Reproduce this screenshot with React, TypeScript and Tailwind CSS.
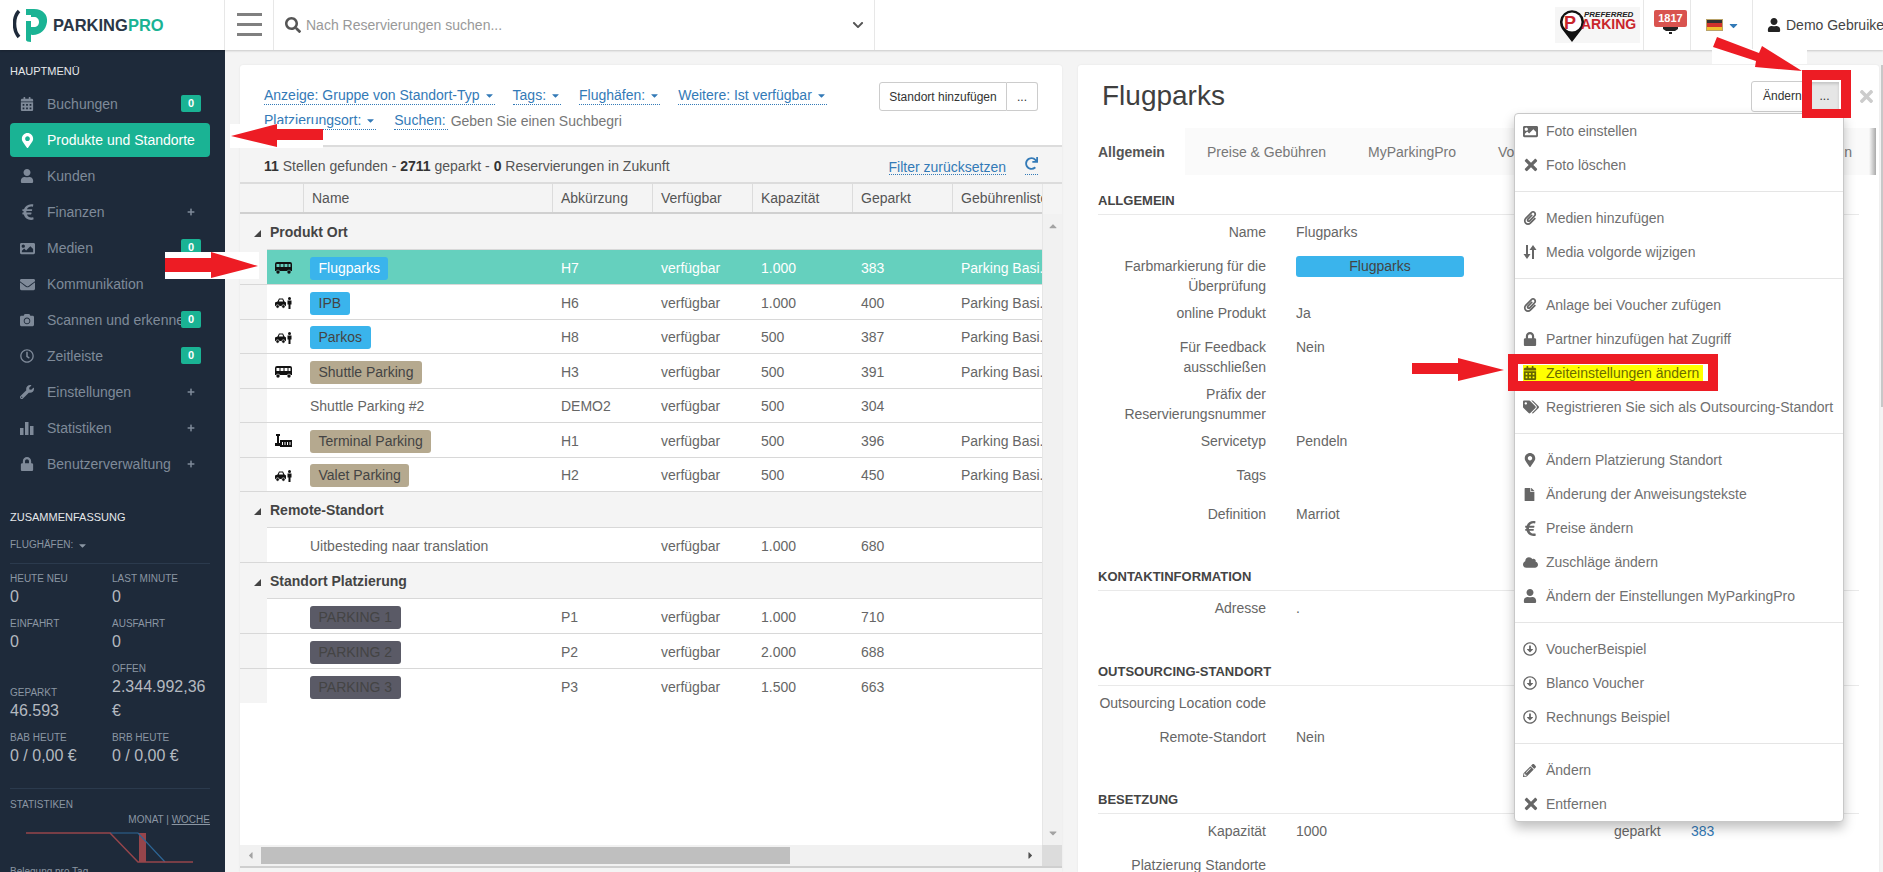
import React from "react";
import {
  FaCalendarAlt, FaMapMarkerAlt, FaUser, FaEuroSign, FaImage, FaEnvelope, FaCamera, FaRegClock,
  FaWrench, FaLock, FaPlus, FaTimes, FaPaperclip, FaFile, FaCloud, FaTags, FaPencilAlt, FaSearch,
  FaCaretDown, FaCaretUp, FaCaretLeft, FaCaretRight, FaChevronDown, FaRedo, FaRegArrowAltCircleDown,
} from "react-icons/fa";

const BusIcon = ({ color = "#111" }: { color?: string }) => (
  <svg width="17" height="12" viewBox="0 0 17 12">
    <path fill={color} fillRule="evenodd" d="M2 0h13a2 2 0 0 1 2 2v7h-1.2a2 2 0 0 0-3.6 0H4.8a2 2 0 0 0-3.6 0H0V2a2 2 0 0 1 2-2zM1.5 2v3h3V2zM5.5 2v3h3V2zM9.5 2v3h3V2zM13.5 2v3h2V2z" />
    <circle cx="3" cy="10" r="1.7" fill={color} />
    <circle cx="14" cy="10" r="1.7" fill={color} />
  </svg>
);

const ValetIcon = () => (
  <svg width="17" height="12" viewBox="0 0 17 12">
    <path fill="#111" fillRule="evenodd" d="M2.5 4.5L4 1.5h4l1.5 3L11 5.5V9H0V5.5zM4.6 2.5L3.8 4.5h4.4L7.4 2.5z" />
    <circle cx="2.6" cy="9.5" r="1.7" fill="#111" stroke="#fff" strokeWidth=".6" />
    <circle cx="8.4" cy="9.5" r="1.7" fill="#111" stroke="#fff" strokeWidth=".6" />
    <circle cx="14.5" cy="1.5" r="1.5" fill="#111" />
    <path fill="#111" d="M12.5 3.5h4v4h-1v4.5h-2V7.5h-1z" />
  </svg>
);

const TerminalIcon = () => (
  <svg width="17" height="14" viewBox="0 0 17 14">
    <path fill="#111" d="M1 0h4v2H4v7h1v3H0V9h2V2H1z" />
    <path fill="#111" fillRule="evenodd" d="M5 6h12v7H5zM7 8v3h1V8zM9.5 8v3h1V8zM12 8v3h1V8zM14.5 8v3h1V8z" />
  </svg>
);

const BarsIcon = () => (
  <svg width="14" height="13" viewBox="0 0 14 13" fill="#7f8a99">
    <rect x="0" y="6" width="3.5" height="7" />
    <rect x="5" y="0" width="3.5" height="13" />
    <rect x="10" y="4" width="3.5" height="9" />
  </svg>
);

const SortIcon = () => (
  <svg width="14" height="14" viewBox="0 0 14 14" fill="#666">
    <path d="M3 0h2v9h2.5L4 14 .5 9H3z" />
    <path d="M9 14h2V5h2.5L10 0 6.5 5H9z" />
  </svg>
);

const sideItems = [
  { label: "Buchungen", icon: <FaCalendarAlt size={14} />, badge: true },
  { label: "Produkte und Standorte", icon: <FaMapMarkerAlt size={15} />, active: true },
  { label: "Kunden", icon: <FaUser size={14} /> },
  { label: "Finanzen", icon: <FaEuroSign size={18} className="-ml-[1px]" />, plus: true },
  { label: "Medien", icon: <FaImage size={15} />, badge: true },
  { label: "Kommunikation", icon: <FaEnvelope size={15} /> },
  { label: "Scannen und erkennen", icon: <FaCamera size={14} />, badge: true },
  { label: "Zeitleiste", icon: <FaRegClock size={14} />, badge: true },
  { label: "Einstellungen", icon: <FaWrench size={14} />, plus: true },
  { label: "Statistiken", icon: <BarsIcon />, plus: true },
  { label: "Benutzerverwaltung", icon: <FaLock size={14} />, plus: true },
];

const stats = [
  { label: "HEUTE NEU", value: "0" },
  { label: "LAST MINUTE", value: "0" },
  { label: "EINFAHRT", value: "0" },
  { label: "AUSFAHRT", value: "0" },
  { label: "GEPARKT", value: "46.593" },
  { label: "OFFEN", value: "2.344.992,36 €" },
  { label: "BAB HEUTE", value: "0 / 0,00 €" },
  { label: "BRB HEUTE", value: "0 / 0,00 €" },
];

function Sidebar() {
  return (
    <aside className="w-[225px] shrink-0 bg-[#1e2a3a] overflow-hidden text-[#7f8a99]">
      <div className="h-[36px] pl-[10px] pt-[14px] text-[11px] leading-[14px] text-[#e6e8ea]">HAUPTMENÜ</div>
      {sideItems.map((item) => (
        <div key={item.label} className="h-[36px] pl-[10px] pr-[15px] py-px">
          <div className={`relative h-[34px] flex items-center rounded-[4px] ${item.active ? "bg-[#1ab394] text-white" : ""}`}>
            <span className="w-[37px] pl-[10px] flex">{item.icon}</span>
            <span className="text-[14px] whitespace-nowrap">{item.label}</span>
            {item.badge && (
              <span className="absolute left-[171px] top-[8px] w-[20px] h-[17px] rounded-[2px] bg-[#1ab394] text-white text-[11px] font-bold flex items-center justify-center">0</span>
            )}
            {item.plus && <FaPlus size={8} className="absolute left-[177px] top-[13px]" />}
          </div>
        </div>
      ))}
      <div className="mt-[28px] pl-[10px] text-[11px] leading-[14px] text-[#e6e8ea] font-medium">ZUSAMMENFASSUNG</div>
      <div className="mt-[14px] ml-[10px] mr-[15px] h-[18px] pb-[4px] text-[10px] leading-[14px] flex items-center gap-[4px] text-[#8b96a3]">
        FLUGHÄFEN: <FaCaretDown size={11} />
      </div>
      <div className="ml-[10px] mr-[15px] mt-[7px] border-t border-[#2b3a4d]" />
      <div className="ml-[10px] mt-[9px] grid grid-cols-[102px_98px] gap-y-[9px] items-end">
        {stats.map((s) => (
          <div key={s.label}>
            <div className="text-[10px] leading-[12px] text-[#8b96a3]">{s.label}</div>
            <div className="text-[16px] leading-[24px] text-[#b4b9c0]">{s.value}</div>
          </div>
        ))}
      </div>
      <div className="ml-[10px] mr-[15px] mt-[20px] border-t border-[#2b3a4d]" />
      <div className="mx-[10px] mt-[9px] text-[10px] leading-[14px] text-[#8b96a3]">STATISTIKEN</div>
      <div className="ml-[10px] mr-[15px] text-right text-[10px] leading-[16px] text-[#8b96a3]">
        MONAT | <span className="underline">WOCHE</span>
      </div>
      <svg width="225" height="32" viewBox="0 0 225 32" className="block mt-[3px]">
        <rect x="139" y="2" width="7" height="29" fill="#96454b" />
        <path d="M110 2H138L165 31" fill="none" stroke="#2d6696" strokeWidth="1.2" />
        <path d="M26 2H110L138 31H193" fill="none" stroke="#96454b" strokeWidth="1.4" />
      </svg>
      <div className="mx-[10px] mt-[2px] text-[10px] leading-[14px] text-[#8b96a3]">Belegung pro Tag</div>
    </aside>
  );
}

function Header() {
  return (
    <header className="h-[50px] shrink-0 bg-white flex shadow-[0_1px_2px_rgba(0,0,0,0.18)] relative z-10">
      <div className="w-[225px] shrink-0 border-r border-[#e7e7e7] flex items-center pl-[13px]">
        <svg width="35" height="33" viewBox="0 0 35 33">
          <path d="M6 2C0 8 0 21 6 28" fill="none" stroke="#1e2a3a" strokeWidth="3.5" />
          <path fill="#1ab394" d="M13 0h8c9 0 14 6 13 13-1 8-7 13-14 13-1 0-2 0-2-1v-7h3c3 0 5-2 5-5s-2-5-5-5h-3v-2h-5zM13 12h5v21c-3 0-5-1-5-2z" />
        </svg>
        <span className="ml-[5px] text-[16.5px] font-bold text-[#2a3646] leading-none whitespace-nowrap">
          PARKING<span className="text-[#1ab394]">PRO</span>
        </span>
      </div>
      <div className="w-[49px] shrink-0 border-r border-[#e7e7e7] pl-[12px] pt-[13px] flex flex-col gap-[7px]">
        <div className="w-[25px] h-[3px] bg-[#808080]" />
        <div className="w-[25px] h-[3px] bg-[#808080]" />
        <div className="w-[25px] h-[3px] bg-[#808080]" />
      </div>
      <div className="w-[601px] shrink-0 border-r border-[#e7e7e7] flex items-center pl-[11px] pr-[10px]">
        <FaSearch size={16} className="text-[#555]" />
        <span className="ml-[5px] text-[14px] text-[#999]">Nach Reservierungen suchen...</span>
        <FaChevronDown size={12} className="ml-auto text-[#555]" />
      </div>
      <div className="ml-auto flex items-stretch h-full">
        <div className="w-[92px] flex items-center justify-center">
          <svg width="85" height="36" viewBox="0 0 85 36" className="bg-[#f6f6f6]">
            <path fill="#111" d="M7 22a12 12 0 1 1 20 0l-10 13z" />
            <circle cx="17" cy="15" r="9.5" fill="#fff" />
            <text x="9" y="22" fontFamily="'Liberation Sans', sans-serif" fontWeight="700" fontSize="18" fill="#c9252c">P</text>
            <text x="26" y="22" fontFamily="'Liberation Sans', sans-serif" fontWeight="700" fontSize="14" fill="#c9252c">ARKING</text>
            <text x="29" y="10" fontFamily="'Liberation Sans', sans-serif" fontWeight="700" fontStyle="italic" fontSize="8" fill="#222">PREFERRED</text>
          </svg>
        </div>
        <div className="w-[47px] border-l border-[#e7e7e7] pl-[10px] pt-[10px]">
          <div className="w-[33px] h-[17px] rounded-[2px] bg-[#d9534f] text-white text-[11px] font-bold flex items-center justify-center">1817</div>
          <svg width="33" height="7" viewBox="0 0 33 7" className="block">
            <path fill="#222" d="M9 0h15v2l-3 2h-9L9 2zM15 5h3v2h-3z" />
          </svg>
        </div>
        <div className="w-[62px] border-l border-[#e7e7e7] pl-[15px] flex items-center gap-[4px]">
          <div className="w-[17px] h-[12px] flex flex-col border border-[#b9a36a]">
            <div className="flex-1 bg-[#333]" />
            <div className="flex-1 bg-[#d1332c]" />
            <div className="flex-1 bg-[#f0c030]" />
          </div>
          <FaCaretDown size={13} className="text-[#337ab7]" />
        </div>
        <div className="w-[131px] border-l border-[#e7e7e7] pl-[14px] flex items-center gap-[5px] overflow-hidden whitespace-nowrap text-[14px] text-[#444]">
          <FaUser size={14} className="text-[#222] shrink-0" /> Demo Gebruiker
        </div>
      </div>
    </header>
  );
}

function Dotted({ children, caret = true }: { children: React.ReactNode; caret?: boolean }) {
  return (
    <span className={`inline-flex items-center gap-[4px] h-[18px] border-b border-dotted border-[#337ab7] text-[#337ab7] whitespace-nowrap ${caret ? "" : "pr-[2px]"}`}>
      {children}
      {caret && <FaCaretDown size={11} />}
    </span>
  );
}

type Row = {
  icon?: React.ReactNode;
  name: string;
  tone?: "blue" | "tan" | "dark";
  code?: string;
  cap: string;
  parked: string;
  fee?: boolean;
  h: "h-[35px]" | "h-[34px]";
  selected?: boolean;
};

const productRows: Row[] = [
  { icon: <BusIcon />, name: "Flugparks", tone: "blue", code: "H7", cap: "1.000", parked: "383", fee: true, h: "h-[35px]", selected: true },
  { icon: <ValetIcon />, name: "IPB", tone: "blue", code: "H6", cap: "1.000", parked: "400", fee: true, h: "h-[35px]" },
  { icon: <ValetIcon />, name: "Parkos", tone: "blue", code: "H8", cap: "500", parked: "387", fee: true, h: "h-[34px]" },
  { icon: <BusIcon />, name: "Shuttle Parking", tone: "tan", code: "H3", cap: "500", parked: "391", fee: true, h: "h-[35px]" },
  { name: "Shuttle Parking #2", code: "DEMO2", cap: "500", parked: "304", h: "h-[34px]" },
  { icon: <TerminalIcon />, name: "Terminal Parking", tone: "tan", code: "H1", cap: "500", parked: "396", fee: true, h: "h-[35px]" },
  { icon: <ValetIcon />, name: "Valet Parking", tone: "tan", code: "H2", cap: "500", parked: "450", fee: true, h: "h-[34px]" },
];
const remoteRows: Row[] = [{ name: "Uitbesteding naar translation", cap: "1.000", parked: "680", h: "h-[35px]" }];
const placeRows: Row[] = [
  { name: "PARKING 1", tone: "dark", code: "P1", cap: "1.000", parked: "710", h: "h-[35px]" },
  { name: "PARKING 2", tone: "dark", code: "P2", cap: "2.000", parked: "688", h: "h-[35px]" },
  { name: "PARKING 3", tone: "dark", code: "P3", cap: "1.500", parked: "663", h: "h-[34px]" },
];

const cols = "grid grid-cols-[27px_36px_249px_100px_100px_100px_100px_90px]";

function TableRow({ row, last }: { row: Row; last?: boolean }) {
  const tone =
    row.tone === "blue" ? "bg-[#3ab4ec]" : row.tone === "tan" ? "bg-[#b5a98f]" : row.tone === "dark" ? "bg-[#5a5a66]" : "";
  const text = row.selected ? "text-white" : "text-[#666]";
  const cellBg = row.selected ? "bg-[#65d0be]" : "bg-white";
  return (
    <div className={`${cols} ${row.h} items-center text-[14px] ${text} ${last ? "" : "border-b border-[#d8d8d8]"}`}>
      <div className="h-full bg-[#f4f4f4]" />
      <div className={`h-full pt-[2px] pl-[8px] flex items-center ${cellBg}`}>{row.icon}</div>
      <div className={`h-full pt-[2px] flex items-center pl-[7px] ${cellBg}`}>
        {row.tone ? (
          <span className={`${tone} h-[23px] px-[8.5px] rounded-[3px] flex items-center ${row.selected ? "text-white" : "text-[#444]"}`}>{row.name}</span>
        ) : (
          row.name
        )}
      </div>
      {[row.code ?? "", "verfügbar", row.cap, row.parked].map((v, i) => (
        <div key={i} className={`h-full pt-[2px] flex items-center pl-[9px] ${cellBg}`}>{v}</div>
      ))}
      <div className={`h-full pt-[2px] flex items-center pl-[9px] min-w-0 overflow-hidden whitespace-nowrap ${cellBg}`}>
        {row.fee && "Parking Basi..."}
      </div>
    </div>
  );
}

function GroupRow({ label }: { label: string }) {
  return (
    <div className="h-[36px] flex items-center bg-[#f4f4f4] relative">
      <svg width="7" height="7" viewBox="0 0 7 7" className="ml-[14px] mt-[2px]">
        <polygon points="7,0 7,7 0,7" fill="#444" />
      </svg>
      <span className="ml-[9px] pt-[1px] text-[14px] font-bold text-[#444]">{label}</span>
      <div className="absolute left-[27px] right-0 bottom-0 border-b border-[#d8d8d8]" />
    </div>
  );
}

function LeftPanel() {
  const heads = ["Name", "Abkürzung", "Verfügbar", "Kapazität", "Geparkt", "Gebührenliste"];
  return (
    <section className="w-[822px] shrink-0 bg-white rounded-t-[3px] flex flex-col shadow-[0_0_2px_rgba(0,0,0,0.08)] overflow-hidden">
      <div className="h-[82px] shrink-0 border-b-2 border-[#dcdcdc] flex justify-between pl-[24px] pr-[24px] text-[14px]">
        <div className="pt-[22px]">
          <div className="h-[25px] flex gap-[18px] items-start">
            <Dotted>Anzeige: Gruppe von Standort-Typ</Dotted>
            <Dotted>Tags:</Dotted>
            <Dotted>Flughäfen:</Dotted>
            <Dotted>Weitere: Ist verfügbar</Dotted>
          </div>
          <div className="h-[25px] flex gap-[18px] items-start">
            <Dotted>Platzierungsort:</Dotted>
            <div className="flex gap-[3px]">
              <Dotted caret={false}>Suchen:</Dotted>
              <span className="text-[#777] whitespace-nowrap leading-[18px]">Geben Sie einen Suchbegri</span>
            </div>
          </div>
        </div>
        <div className="pt-[17px] flex text-[12px] text-[#333]">
          <div className="w-[128px] h-[29px] border border-[#ccc] rounded-l-[3px] flex items-center justify-center">Standort hinzufügen</div>
          <div className="w-[31px] h-[29px] border border-l-0 border-[#ccc] rounded-r-[3px] flex items-center justify-center">...</div>
        </div>
      </div>
      <div className="h-[37px] shrink-0 bg-[#f4f4f4] border-b-2 border-[#dcdcdc] flex items-center pt-[3px] pl-[24px] pr-[24px] text-[14px] text-[#555]">
        <span>
          <b className="text-[#333]">11</b> Stellen gefunden - <b className="text-[#333]">2711</b> geparkt - <b className="text-[#333]">0</b> Reservierungen in Zukunft
        </span>
        <span className="ml-auto h-[18px] border-b border-dotted border-[#337ab7] text-[#337ab7]">Filter zurücksetzen</span>
        <span className="ml-[19px] h-[18px] border-b border-dotted border-[#337ab7] text-[#337ab7]"><FaRedo size={13} /></span>
      </div>
      <div className="flex-1 min-h-0 flex">
        <div className="w-[802px] flex flex-col">
          <div className="h-[30px] shrink-0 grid grid-cols-[63px_249px_100px_100px_100px_100px_90px] bg-[#f4f4f4] border-b-2 border-[#d0d0d0] text-[14px] text-[#555]">
            <div />
            {heads.map((h) => (
              <div key={h} className="border-l border-[#dcdcdc] pl-[8px] flex items-center overflow-hidden whitespace-nowrap">{h}</div>
            ))}
          </div>
          <div className="flex-1 bg-white">
            <GroupRow label="Produkt Ort" />
            {productRows.map((r) => <TableRow key={r.name} row={r} />)}
            <GroupRow label="Remote-Standort" />
            {remoteRows.map((r) => <TableRow key={r.name} row={r} />)}
            <GroupRow label="Standort Platzierung" />
            {placeRows.map((r, i) => <TableRow key={r.name} row={r} last={i === 2} />)}
          </div>
        </div>
        <div className="w-[20px] bg-[#f1f1f1] border-l border-[#e6e6e6] flex flex-col items-center text-[#a3a3a3]">
          <div className="h-[30px] w-full bg-[#f4f4f4] shrink-0" />
          <FaCaretUp size={12} className="mt-[6px]" />
          <FaCaretDown size={12} className="mt-auto mb-[6px]" />
        </div>
      </div>
      <div className="h-[21px] shrink-0 flex bg-[#f1f1f1]">
        <div className="w-[802px] relative flex items-center">
          <FaCaretLeft size={11} className="ml-[5px] text-[#a3a3a3]" />
          <div className="ml-[5px] w-[529px] h-[17px] bg-[#bfbfbf]" />
          <FaCaretRight size={11} className="ml-auto mr-[6px] text-[#505050]" />
        </div>
        <div className="w-[20px] bg-[#dcdcdc]" />
      </div>
      <div className="h-[6px] shrink-0 border-t-2 border-[#cfcfcf] bg-[#f4f4f4]" />
    </section>
  );
}

function Heading({ label, h }: { label: string; h: string }) {
  return (
    <div className={`${h} mx-[20px] flex items-end border-b border-[#e9e9e9] pb-[3px] text-[13px] leading-[20px] font-bold text-[#444]`}>
      {label}
    </div>
  );
}

function Field({ label, value, h = "h-[34px]", badge, children }: { label: React.ReactNode; value?: string; h?: string; badge?: boolean; children?: React.ReactNode }) {
  return (
    <div className={`${h} flex pt-[7px] text-[14px] leading-[20px] text-[#666]`}>
      <div className="w-[188px] text-right shrink-0">{label}</div>
      <div className="ml-[30px] flex-1 flex">
        {badge ? (
          <div className="w-[168px] h-[21px] rounded-[3px] bg-[#3ab4ec] text-[#444] text-center">{value}</div>
        ) : (
          <div>{value}</div>
        )}
        {children}
      </div>
    </div>
  );
}

type MenuEntry = { label: string; icon: React.ReactNode; mark?: boolean };

const menuGroups: MenuEntry[][] = [
  [
    { label: "Foto einstellen", icon: <FaImage size={15} /> },
    { label: "Foto löschen", icon: <FaTimes size={18} className="-ml-[1px]" /> },
  ],
  [
    { label: "Medien hinzufügen", icon: <FaPaperclip size={14} /> },
    { label: "Media volgorde wijzigen", icon: <SortIcon /> },
  ],
  [
    { label: "Anlage bei Voucher zufügen", icon: <FaPaperclip size={14} /> },
    { label: "Partner hinzufügen hat Zugriff", icon: <FaLock size={14} /> },
    { label: "Zeiteinstellungen ändern", icon: <FaCalendarAlt size={14} className="text-[#666600]" />, mark: true },
    { label: "Registrieren Sie sich als Outsourcing-Standort", icon: <FaTags size={16} /> },
  ],
  [
    { label: "Ändern Platzierung Standort", icon: <FaMapMarkerAlt size={14} /> },
    { label: "Änderung der Anweisungstekste", icon: <FaFile size={13} /> },
    { label: "Preise ändern", icon: <FaEuroSign size={17} className="-ml-[1px]" /> },
    { label: "Zuschläge ändern", icon: <FaCloud size={15} /> },
    { label: "Ändern der Einstellungen MyParkingPro", icon: <FaUser size={14} /> },
  ],
  [
    { label: "VoucherBeispiel", icon: <FaRegArrowAltCircleDown size={14} /> },
    { label: "Blanco Voucher", icon: <FaRegArrowAltCircleDown size={14} /> },
    { label: "Rechnungs Beispiel", icon: <FaRegArrowAltCircleDown size={14} /> },
  ],
  [
    { label: "Ändern", icon: <FaPencilAlt size={13} /> },
    { label: "Entfernen", icon: <FaTimes size={18} className="-ml-[1px]" /> },
  ],
];

function ActionMenu() {
  return (
    <div className="absolute right-[35px] top-[48px] w-[330px] bg-white border border-[#c8c8c8] rounded-[4px] shadow-[0_6px_12px_rgba(0,0,0,0.25)] z-20 text-[14px] text-[#707070] whitespace-nowrap">
      {menuGroups.map((group, gi) => (
        <div key={gi}>
          {gi > 0 && <div className="my-[9px] border-t border-[#e5e5e5]" />}
          {group.map((item) =>
            item.mark ? (
              <div key={item.label} className="h-[34px] flex items-center pl-[8px]">
                <div className="w-[180px] h-[17px] bg-[#ffff00] text-[#6b6b00] flex items-center">
                  <span className="w-[23px] flex">{item.icon}</span>
                  {item.label}
                </div>
              </div>
            ) : (
              <div key={item.label} className="h-[34px] flex items-center pl-[8px]">
                <span className="w-[23px] flex text-[#666]">{item.icon}</span>
                {item.label}
              </div>
            )
          )}
        </div>
      ))}
    </div>
  );
}

function RightPanel() {
  return (
    <section className="relative w-[801px] shrink-0 bg-white rounded-t-[3px] shadow-[0_0_2px_rgba(0,0,0,0.08)]">
      <div className="h-[63px] flex items-center pl-[24px]">
        <h1 className="text-[28px] text-[#3f3f3f] -mt-[2px]">Flugparks</h1>
        <div className="ml-auto -mt-[1px] flex text-[12px] text-[#333] items-center">
          <div className="w-[59px] h-[31px] border border-[#ccc] rounded-l-[3px] pl-[11px] flex items-center overflow-hidden">Ändern</div>
          <div className="w-[29px] h-[29px] bg-[#e6e6e6] shadow-[inset_0_2px_3px_rgba(0,0,0,0.15)] flex items-center justify-center">...</div>
          <FaTimes size={19} className="ml-[18px] mr-[3px] text-[#ccc]" />
        </div>
      </div>
      <div className="h-[47px] flex text-[14px] text-[#777] relative">
        <div className="w-[107px] pl-[20px] pt-[1px] flex items-center font-bold text-[#555] bg-white">Allgemein</div>
        <div className="flex-1 bg-[#fafafa] pt-[1px] flex items-center whitespace-nowrap pr-[17px]">
          <span className="px-[21px] ml-px">Preise &amp; Gebühren</span>
          <span className="px-[21px]">MyParkingPro</span>
          <span className="px-[21px]">Vouchers</span>
          <span className="ml-auto">Optionen</span>
        </div>
        <div className="w-[7px] bg-gradient-to-r from-[#fafafa] to-[#aaaaaa]" />
        <div className="w-[3px] bg-white" />
      </div>
      <Heading label="ALLGEMEIN" h="h-[40px]" />
      <Field label="Name" value="Flugparks" />
      <Field label={<>Farbmarkierung für die<br />Überprüfung</>} value="Flugparks" badge h="h-[47px]" />
      <Field label="online Produkt" value="Ja" />
      <Field label={<>Für Feedback<br />ausschließen</>} value="Nein" h="h-[47px]" />
      <Field label={<>Präfix der<br />Reservierungsnummer</>} h="h-[47px]" />
      <Field label="Servicetyp" value="Pendeln" />
      <Field label="Tags" h="h-[39px]" />
      <Field label="Definition" value="Marriot" />
      <Heading label="KONTAKTINFORMATION" h="h-[60px]" />
      <Field label="Adresse" value="." />
      <Heading label="OUTSOURCING-STANDORT" h="h-[61px]" />
      <Field label="Outsourcing Location code" />
      <Field label="Remote-Standort" value="Nein" />
      <Heading label="BESETZUNG" h="h-[60px]" />
      <Field label="Kapazität">
        <div className="w-[318px]">1000</div>
        <div className="w-[77px]">geparkt</div>
        <div className="text-[#337ab7]">383</div>
      </Field>
      <Field label="Platzierung Standorte" />
      <ActionMenu />
    </section>
  );
}

// red hand-drawn marks that were pasted over the original screenshot
function Annotations() {
  return (
    <svg className="absolute inset-0 z-30 pointer-events-none" width="1883" height="872" viewBox="0 0 1883 872">
      <rect x="230" y="124" width="93" height="24" fill="#fff" />
      <polygon fill="#ed1c24" points="231,136 277,124 277,129 323,129 323,140 277,140 277,147" />
      <rect x="165" y="252" width="94" height="27" fill="#fff" />
      <polygon fill="#ed1c24" points="165,258 211,258 211,252 258,266 211,278 211,272 165,272" />
      <polygon fill="#ed1c24" points="1412,363 1458,363 1458,358 1504,370 1458,381 1458,374 1412,374" />
      <rect x="1712" y="49" width="95" height="15" fill="#fff" />
      <polygon fill="#ed1c24" points="1717,37 1759,53 1762,46 1802,71 1755,67 1756,61 1713,47" />
      <path fill="#ed1c24" fillRule="evenodd" d="M1802 70h49v48h-49zM1812 80v29h29V80z" />
      <path fill="#ed1c24" fillRule="evenodd" d="M1508 354h210v37h-210zM1518 364v17h190v-17z" />
      <rect x="1518" y="364" width="5" height="17" fill="#fff" />
      <rect x="1703" y="364" width="5" height="17" fill="#fff" />
    </svg>
  );
}

export default function App() {
  return (
    <div className="relative h-[872px] w-full overflow-hidden flex flex-col bg-[#f4f4f4] font-['Liberation_Sans',Arial,sans-serif]">
      <Header />
      <div className="flex-1 min-h-0 flex">
        <Sidebar />
        <main className="flex-1 min-w-0 flex pl-[15px] pt-[15px] gap-[16px] relative">
          <LeftPanel />
          <RightPanel />
          <div className="absolute right-0 top-[15px] w-[2px] h-[342px] bg-[#c8c8c8]" />
        </main>
      </div>
      <Annotations />
    </div>
  );
}
